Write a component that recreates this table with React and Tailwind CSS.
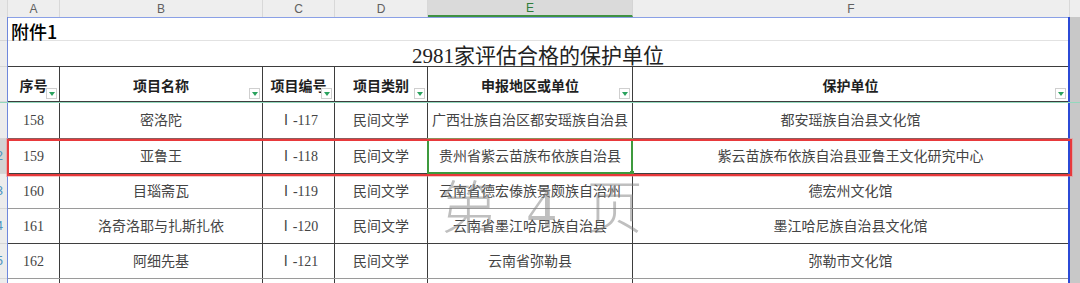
import React from "react";

const SANS = "font-['Noto_Sans_CJK_SC','Liberation_Sans',sans-serif]";
const SERIF = "font-['Liberation_Serif','Noto_Sans_CJK_SC',serif]";
const UI = "font-['Liberation_Sans','Noto_Sans_CJK_SC',sans-serif]";

const rows = [
  { no: "158", name: "密洛陀", code: "Ⅰ-117", type: "民间文学", area: "广西壮族自治区都安瑶族自治县", unit: "都安瑶族自治县文化馆", h: "h-[37px]", line: "border-b-[#3f3f3f]", side: "", rowNo: "" },
  { no: "159", name: "亚鲁王", code: "Ⅰ-118", type: "民间文学", area: "贵州省紫云苗族布依族自治县", unit: "紫云苗族布依族自治县亚鲁王文化研究中心", h: "h-[35px]", line: "border-b-[#3f3f3f]", side: "bg-[#d3d3d3]", rowNo: "2", selected: true },
  { no: "160", name: "目瑙斋瓦", code: "Ⅰ-119", type: "民间文学", area: "云南省德宏傣族景颇族自治州", unit: "德宏州文化馆", h: "h-[35px]", line: "border-b-[#9a9a9a]", side: "", rowNo: "3" },
  { no: "161", name: "洛奇洛耶与扎斯扎依", code: "Ⅰ-120", type: "民间文学", area: "云南省墨江哈尼族自治县", unit: "墨江哈尼族自治县文化馆", h: "h-[35px]", line: "border-b-[#3f3f3f]", side: "", rowNo: "4" },
  { no: "162", name: "阿细先基", code: "Ⅰ-121", type: "民间文学", area: "云南省弥勒县", unit: "弥勒市文化馆", h: "h-[35px]", line: "border-b-[#9a9a9a]", side: "", rowNo: "5" },
];

const Drop = () => (
  <span className="absolute right-[2px] bottom-[2px] flex h-[11px] w-[11px] items-center justify-center border border-[#cfcfcf] bg-white">
    <svg width="6" height="4" viewBox="0 0 6 4">
      <polygon points="0,0 6,0 3,4" fill="#2aa25e" />
    </svg>
  </span>
);

const ColHead = ({ w, label, active }) => (
  <div
    className={
      active
        ? `${w} flex h-full items-center justify-center border-r border-r-[#d4d4d4] border-b-2 border-b-[#3f9142] bg-[#dadada] text-[12px] text-[#2f7d3a]`
        : `${w} flex h-full items-center justify-center border-r border-r-[#d8d8d8] bg-[#eeeeee] text-[12px] text-[#606060]`
    }
  >
    {label}
  </div>
);

const App = () => {
  return (
    <div className="h-[283px] w-[1080px] overflow-hidden bg-white">
      {/* column letters */}
      <div className={`flex h-[17px] ${UI}`}>
        <div className="h-full w-[8px] border-r border-r-[#d8d8d8] bg-[#eaeaea]" />
        <ColHead w="w-[52px]" label="A" />
        <ColHead w="w-[203px]" label="B" />
        <ColHead w="w-[72px]" label="C" />
        <ColHead w="w-[93px]" label="D" />
        <ColHead w="w-[205px]" label="E" active />
        <ColHead w="w-[437px]" label="F" />
        <div className="h-full w-[10px] bg-[#eeeeee]" />
      </div>

      <div className="relative flex">
        {/* row number strip */}
        <div className="flex w-[7px] flex-col bg-[#ececec]">
          <div className="h-px" />
          <div className="h-[23px] border-b border-b-[#d6d6d6]" />
          <div className="h-[26px] border-b border-b-[#d6d6d6]" />
          <div className="h-[35px] border-b border-b-[#d6d6d6]" />
          {rows.map((r) => (
            <div key={r.no} className={`${r.h} ${r.side} flex items-center justify-end overflow-hidden border-b border-b-[#d6d6d6]`}>
              <span className={`mr-[4px] shrink-0 text-[13px] text-[#4d94c0] ${UI}`}>{r.rowNo}</span>
            </div>
          ))}
          <div className="h-[4px]" />
        </div>

        {/* sheet */}
        <div className="relative flex w-[1063px] flex-col border-l border-l-[#6f88dc] border-r-2 border-r-[#2b4ad6]">
          <div className="h-px bg-[#8aa0e6]" />
          <div className="flex h-[23px] items-center border-b border-b-[#e2e2e2] px-[3px] pt-[3px]">
            <span className={`text-[18px] leading-none font-medium text-black ${SANS}`}>附件1</span>
          </div>
          <div className="flex h-[26px] items-center justify-center border-b border-b-[#3d3d3d] pt-[6px]">
            <span className={`text-[21px] leading-none text-[#222] ${SERIF}`}>2981家评估合格的保护单位</span>
          </div>
          <div className={`flex h-[35px] border-b border-b-[#3d3d3d] text-[14px] font-bold text-[#1f1f1f] ${SERIF}`}>
            <div className="relative flex w-[52px] items-center justify-center border-r border-r-[#3d3d3d] pt-[4px]">序号<Drop /></div>
            <div className="relative flex w-[203px] items-center justify-center border-r border-r-[#3d3d3d] pt-[4px]">项目名称<Drop /></div>
            <div className="relative flex w-[72px] items-center justify-center border-r border-r-[#3d3d3d] pt-[4px]">项目编号<Drop /></div>
            <div className="relative flex w-[93px] items-center justify-center border-r border-r-[#3d3d3d] pt-[4px]">项目类别<Drop /></div>
            <div className="relative flex w-[205px] items-center justify-center border-r border-r-[#3d3d3d] pt-[4px]">申报地区或单位<Drop /></div>
            <div className="relative flex w-[435px] items-center justify-center pt-[4px]">保护单位<Drop /></div>
          </div>

          {rows.map((r) => (
            <div key={r.no} className={`${r.h} ${r.line} flex border-b text-[14px] text-[#444] ${SERIF}`}>
              <div className="flex w-[52px] items-center justify-center border-r border-r-[#3d3d3d]">{r.no}</div>
              <div className="flex w-[203px] items-center justify-center border-r border-r-[#3d3d3d]">{r.name}</div>
              <div className="flex w-[72px] items-center justify-center border-r border-r-[#3d3d3d]">{r.code}</div>
              <div className="flex w-[93px] items-center justify-center border-r border-r-[#3d3d3d]">{r.type}</div>
              <div className="relative flex w-[205px] items-center justify-center border-r border-r-[#3d3d3d] whitespace-nowrap">
                {r.area}
                {r.selected && (
                  <span className="pointer-events-none absolute -top-px -left-px -right-px -bottom-px border-2 border-[#3e9a3e]">
                    <span className="absolute -right-[3px] -bottom-[3px] h-[4px] w-[4px] bg-[#3e9a3e]" />
                  </span>
                )}
              </div>
              <div className="flex w-[435px] items-center justify-center">{r.unit}</div>
            </div>
          ))}
          <div className="flex h-[4px]">
            <div className="w-[52px] border-r border-r-[#3d3d3d]" />
            <div className="w-[203px] border-r border-r-[#3d3d3d]" />
            <div className="w-[72px] border-r border-r-[#3d3d3d]" />
            <div className="w-[93px] border-r border-r-[#3d3d3d]" />
            <div className="w-[205px] border-r border-r-[#3d3d3d]" />
            <div className="w-[435px]" />
          </div>

          {/* selected row outline */}
          <div className="pointer-events-none absolute -left-px top-[122px] h-[37px] w-[1065px] border-2 border-[#e8393b] shadow-[0_0_0_1px_rgba(240,130,130,0.45)]" />
        </div>

        {/* right gutter */}
        <div className="w-[10px] bg-[#c8c8c8]" />

        {/* frozen pane line */}
        <div className="pointer-events-none absolute left-0 top-[85px] h-px w-[1080px] bg-[#93d8bd]" />

        {/* page watermark */}
        <div className={`pointer-events-none absolute left-[440px] top-[163px] text-[57px] leading-none font-light tracking-[8px] whitespace-pre text-[#808080] opacity-50 ${SERIF}`}>
          第 4 页
        </div>
      </div>
    </div>
  );
};

export default App;
